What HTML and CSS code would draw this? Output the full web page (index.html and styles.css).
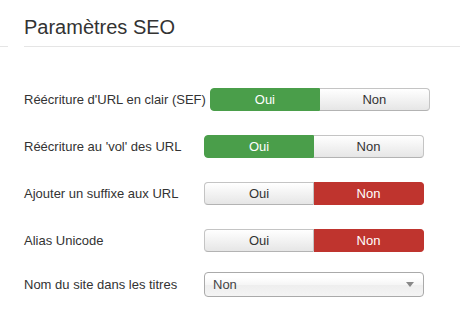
FILE: index.html
```html
<!DOCTYPE html>
<html lang="fr">
<head>
    <meta charset="UTF-8">
    <meta name="viewport" content="width=device-width, initial-scale=1.0">
    <title>Paramètres SEO</title>
    <link rel="stylesheet" href="styles.css">
</head>
<body>
    <div class="header">
        <div class="header-stub"></div>
        <h2 class="legend">Paramètres SEO</h2>
    </div>
    <form class="options">
        <div class="row">
            <label class="row-label">Réécriture d'URL en clair (SEF)</label>
            <div class="btn-group">
                <button type="button" class="btn active-yes">Oui</button>
                <button type="button" class="btn">Non</button>
            </div>
        </div>
        <div class="row">
            <label class="row-label">Réécriture au 'vol' des URL</label>
            <div class="btn-group">
                <button type="button" class="btn active-yes">Oui</button>
                <button type="button" class="btn">Non</button>
            </div>
        </div>
        <div class="row">
            <label class="row-label">Ajouter un suffixe aux URL</label>
            <div class="btn-group">
                <button type="button" class="btn">Oui</button>
                <button type="button" class="btn active-no">Non</button>
            </div>
        </div>
        <div class="row">
            <label class="row-label">Alias Unicode</label>
            <div class="btn-group">
                <button type="button" class="btn">Oui</button>
                <button type="button" class="btn active-no">Non</button>
            </div>
        </div>
        <div class="row row-select">
            <label class="row-label">Nom du site dans les titres</label>
            <div class="select">
                <span>Non</span>
                <span class="arrow"></span>
            </div>
        </div>
    </form>
</body>
</html>
```

FILE: styles.css
```css
body {
    margin: 0;
    padding: 0;
    background: #fff;
    color: #333;
    font-family: "Liberation Sans", Arial, sans-serif;
    font-size: 13px;
}

.header {
    display: flex;
    align-items: flex-end;
    padding-top: 8px;
}

.header-stub {
    width: 8px;
    margin-right: 16px;
    border-bottom: 1px solid #e5e5e5;
}

.legend {
    flex: 1;
    margin: 0;
    font-size: 20px;
    font-weight: normal;
    line-height: 38px;
    color: #333;
    border-bottom: 1px solid #e5e5e5;
}

.options {
    padding: 41px 0 0 24px;
}

.row {
    display: flex;
    align-items: center;
    height: 23px;
    margin-bottom: 24px;
}

.row-select {
    height: 25px;
    margin-top: -4px;
}

.row-label {
    min-width: 176px;
    padding-right: 4px;
    white-space: nowrap;
}

.btn-group {
    display: flex;
}

.btn {
    width: 110px;
    height: 23px;
    padding: 0;
    font-family: inherit;
    font-size: 13px;
    color: #333;
    background: linear-gradient(#ffffff, #e6e6e6);
    border: 1px solid #c4c4c4;
    border-bottom-color: #b3b3b3;
    cursor: pointer;
}

.btn:first-child {
    border-radius: 4px 0 0 4px;
}

.btn:last-child {
    border-radius: 0 4px 4px 0;
    border-left: none;
}

.btn.active-yes {
    background: #4a9e4a;
    border-color: #4a9e4a;
    color: #fff;
}

.btn.active-no {
    background: #bf342e;
    border-color: #bf342e;
    color: #fff;
}

.select {
    display: flex;
    align-items: center;
    justify-content: space-between;
    box-sizing: border-box;
    width: 220px;
    height: 25px;
    padding: 0 9px 0 8px;
    font-size: 13px;
    color: #444;
    border: 1px solid #aaa;
    border-radius: 4px;
    background: linear-gradient(#fff 20%, #f6f6f6 50%, #eee 52%, #f4f4f4 100%);
}

.arrow {
    width: 0;
    height: 0;
    border-left: 4px solid transparent;
    border-right: 4px solid transparent;
    border-top: 5px solid #888;
}
```
